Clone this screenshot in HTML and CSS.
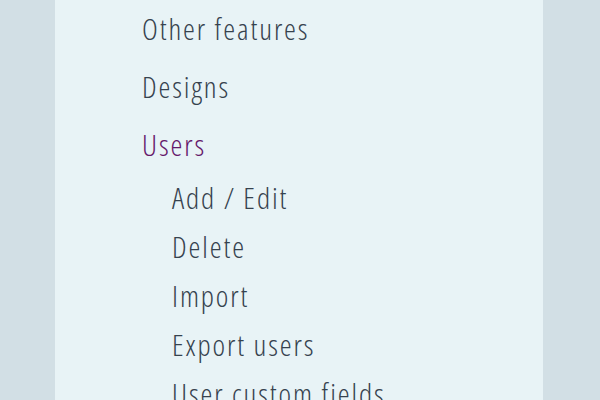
FILE: index.html
```html
<!DOCTYPE html>
<html lang="en">

<head>
    <meta charset="UTF-8">
    <title>Help menu</title>
    <link rel="stylesheet" href="styles.css">
</head>

<body>

    <nav class="sidebar">
        <ul class="menu">
            <li class="menu-item"><a href="#">Other features</a></li>
            <li class="menu-item"><a href="#">Designs</a></li>
            <li class="menu-item active">
                <a href="#">Users</a>
                <ul class="submenu">
                    <li><a href="#">Add / Edit</a></li>
                    <li><a href="#">Delete</a></li>
                    <li><a href="#">Import</a></li>
                    <li><a href="#">Export users</a></li>
                    <li><a href="#">User custom fields</a></li>
                </ul>
            </li>
        </ul>
    </nav>

</body>

</html>
```
FILE: styles.css
```css
html,
body {
    height: 100%;
}

body {
    margin: 0;
    background-color: #d2dfe5;
    font-family: "Open Sans", sans-serif;
    font-stretch: 75%;
    font-weight: 300;
    overflow: hidden;
}

.sidebar {
    margin-left: 55px;
    width: 488px;
    height: 100%;
    background-color: #e8f3f6;
}

.menu {
    list-style: none;
    margin: 0;
    padding: 0 0 0 87px;
}

.menu a {
    color: #36424e;
    text-decoration: none;
    letter-spacing: 1.9px;
}

.menu-item {
    font-size: 30px;
    line-height: 58px;
}

.menu-item.active > a {
    color: #66186b;
}

.submenu {
    list-style: none;
    margin: -1px 0 0;
    padding: 0 0 0 30px;
}

.submenu li {
    line-height: 49px;
}
```
